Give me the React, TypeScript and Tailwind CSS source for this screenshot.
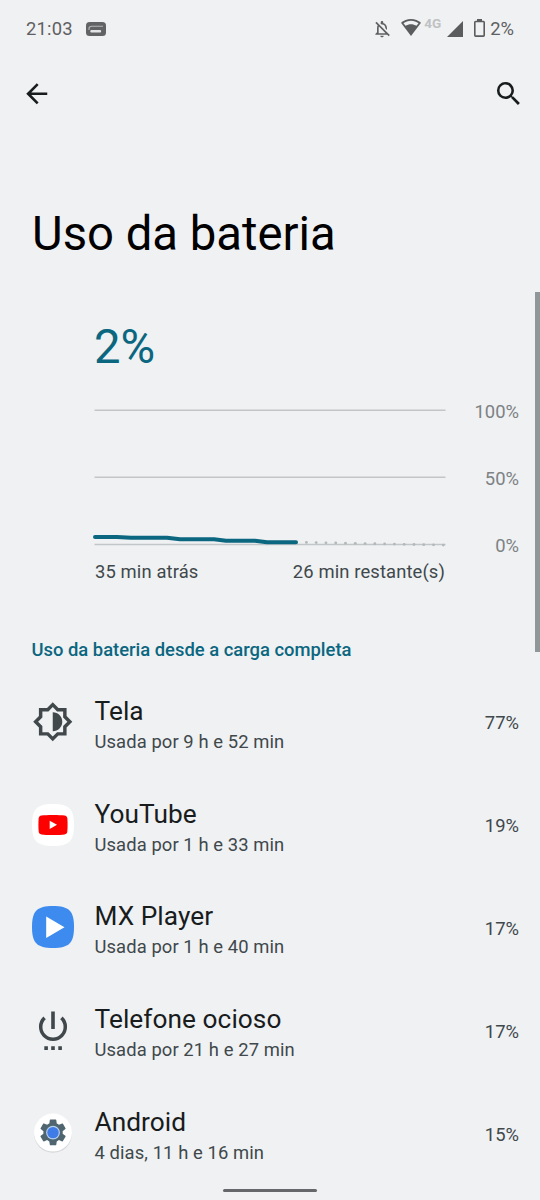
import type { ReactNode } from 'react'
import { MdArrowBack, MdSearch, MdOutlineNotificationsOff } from 'react-icons/md'

interface UsageEntry {
  name: string
  detail: string
  percent: string
  icon: ReactNode
}

function ScreenIcon() {
  return (
    <svg viewBox="0 0 24 24" className="w-[41.5px] h-[41.5px] shrink-0" fill="#40484b">
      <path d="M20 8.69V4h-4.69L12 .69 8.69 4H4v4.69L.69 12 4 15.31V20h4.69L12 23.31 15.31 20H20v-4.69L23.31 12 20 8.69zm-2 5.79V18h-3.52L12 20.48 9.52 18H6v-3.52L3.52 12 6 9.52V6h3.52L12 3.52 14.48 6H18v3.52L20.48 12 18 14.48z" />
      <path d="M12 6.5v11c3.04 0 5.5-2.46 5.5-5.5s-2.46-5.5-5.5-5.5z" />
    </svg>
  )
}

function YouTubeIcon() {
  return (
    <svg viewBox="0 0 42 42" className="w-[42px] h-[42px]">
      <path d="M21 0C37 0 42 5 42 21S37 42 21 42 0 37 0 21 5 0 21 0z" fill="#fff" />
      <path d="M21 10.900c5 0 9.300.2 11.500.5 1.900.3 2.600 1.200 2.800 2.900.4 3.900.4 9.300 0 13.200-.2 1.700-.9 2.600-2.800 2.900-4.500.7-18.500.7-23 0-1.900-.3-2.600-1.200-2.800-2.900-.4-3.900-.4-9.300 0-13.200.2-1.700.9-2.600 2.800-2.900 2.200-.3 6.500-.5 11.500-.5z" fill="#fe0000" />
      <path d="M17.700 16.700v8.200l7.300-4.100z" fill="#fff" />
    </svg>
  )
}

function MxPlayerIcon() {
  return (
    <svg viewBox="0 0 42 42" className="w-[42px] h-[42px]">
      <path d="M21 0C37 0 42 5 42 21S37 42 21 42 0 37 0 21 5 0 21 0z" fill="#3d8bee" />
      <path d="M14.200 10.500v21.500L32.500 21.200z" fill="#fff" />
    </svg>
  )
}

function IdleIcon() {
  return (
    <svg viewBox="0 0 42 42" className="w-[42px] h-[42px]">
      <path d="M12.600 8.900A12.300 12.300 0 1 0 29.400 8.900" fill="none" stroke="#40484b" strokeWidth="3.500" />
      <path d="M19.200 2.500h3.600v17.600h-3.600zM12.300 37.300h3.600v3.600h-3.600zM19.200 37.300h3.600v3.600h-3.600zM26.300 37.300h3.600v3.600h-3.600z" fill="#40484b" />
    </svg>
  )
}

function AndroidIcon() {
  return (
    <svg viewBox="0 0 42 42" className="w-[42px] h-[42px]">
      <circle cx="21" cy="21.800" r="19" fill="#d3d6d8" />
      <circle cx="21" cy="20.600" r="19" fill="#fff" />
      <g transform="translate(4.900 4.300) scale(1.345)">
        <path
          d="M19.140 12.940c.04-.3.060-.61.060-.940 0-.32-.02-.64-.07-.94l2.030-1.580c.18-.14.230-.41.120-.61l-1.920-3.320c-.12-.22-.37-.29-.59-.22l-2.390.96c-.5-.38-1.030-.7-1.620-.94l-.36-2.540c-.04-.24-.24-.41-.48-.41h-3.840c-.24 0-.43.170-.47.410l-.36 2.540c-.59.240-1.130.570-1.620.940l-2.390-.96c-.22-.08-.47 0-.59.220L2.740 8.870c-.12.210-.08.470.120.610l2.030 1.580c-.05.300-.09.630-.09.940s.02.640.070.940l-2.030 1.580c-.18.140-.23.410-.12.610l1.920 3.320c.12.220.37.290.59.220l2.390-.96c.5.380 1.030.700 1.620.940l.36 2.540c.05.240.240.410.480.410h3.840c.24 0 .44-.17.470-.41l.36-2.540c.59-.24 1.130-.56 1.620-.94l2.390.960c.22.080.470 0 .590-.22l1.920-3.320c.12-.22.070-.47-.12-.61l-2.010-1.580z"
          fill="#4f656f"
        />
      </g>
      <circle cx="21" cy="20.600" r="6.900" fill="#b9d0ee" />
      <circle cx="21" cy="20.600" r="5.700" fill="#3f7ce8" />
    </svg>
  )
}

const ENTRIES: UsageEntry[] = [
  { name: 'Tela', detail: 'Usada por 9 h e 52 min', percent: '77%', icon: <ScreenIcon /> },
  { name: 'YouTube', detail: 'Usada por 1 h e 33 min', percent: '19%', icon: <YouTubeIcon /> },
  { name: 'MX Player', detail: 'Usada por 1 h e 40 min', percent: '17%', icon: <MxPlayerIcon /> },
  { name: 'Telefone ocioso', detail: 'Usada por 21 h e 27 min', percent: '17%', icon: <IdleIcon /> },
  { name: 'Android', detail: '4 dias, 11 h e 16 min', percent: '15%', icon: <AndroidIcon /> },
]

function StatusBar() {
  return (
    <div className="flex items-center h-[59px] px-[26px] text-[18.400px] text-[#5f6062]">
      <span className="leading-none tracking-[0.2px]">21:03</span>
      <svg viewBox="0 0 20 14" className="w-5 h-3.5 ml-[13px] -mt-0.5">
        <rect width="20" height="14" rx="3.500" fill="#626365" />
        <path d="M17 4.200H5.800Q3 4.200 3 6.500V8" fill="none" stroke="#b4b6b8" strokeWidth="1.100" />
        <rect x="4.300" y="8" width="10.800" height="2.400" rx="1" fill="#e2e4e6" />
      </svg>
      <div className="ml-auto flex items-center">
        <MdOutlineNotificationsOff className="w-5 h-5 -mt-px" />
        <svg viewBox="0 0 20 17" className="w-5 h-[17px] ml-[9px] -mt-1">
          <path d="M10 0C6.100 0 2.600 1.400 0 3.800L10 17 20 3.800C17.400 1.400 13.900 0 10 0z" fill="#5b5c5e" />
          <path d="M2.500 4.200C4.600 2.700 7.200 1.800 10 1.800S15.400 2.700 17.500 4.200L15.500 6.800C13.900 5.700 12 5.200 10 5.200S6.100 5.700 4.500 6.800z" fill="#eff1f3" />
        </svg>
        <span className="ml-[3px] mb-[11px] text-[13.500px] leading-none font-bold text-[#bfc1c3]">4G</span>
        <svg viewBox="0 0 16 16" className="w-4 h-4 ml-[6px] -mt-0.5">
          <path d="M16 0v16H0z" fill="#5b5c5e" />
        </svg>
        <svg viewBox="0 0 11 18" className="w-[11px] h-[18px] ml-[11px] -mt-[3px]">
          <path d="M3 0h5v2.500H3z" fill="#5b5c5e" />
          <rect x=".8" y="2.500" width="9.400" height="14.600" rx=".8" fill="none" stroke="#5b5c5e" strokeWidth="1.600" />
        </svg>
        <span className="ml-[5px] leading-none">2%</span>
      </div>
    </div>
  )
}

function BatteryChart() {
  // remaining-time projection, one dot every 9.8px until the right edge
  const dots = Array.from({ length: 15 }, (_, i) => ({ x: 213.400 + i * 9.780, y: 142.400 + i * 0.190 }))

  return (
    <div className="flex h-[159px] pl-[93px] pr-[21px] justify-between">
      <svg viewBox="0 0 354 159" className="w-[354px] h-[159px]">
        <path d="M1.500 10.300h351M1.500 77.200h351M1.500 144.500h351" stroke="#c3c6c8" strokeWidth="1.500" />
        {dots.map((dot) => (
          <circle key={dot.x} cx={dot.x} cy={dot.y} r="1.400" fill="#b3b8ba" />
        ))}
        <path
          d="M2 137H24L38 137.800H74L87 139.300H121L133 140.700H162L174 142.300H203"
          fill="none"
          stroke="#0b6680"
          strokeWidth="4"
          strokeLinecap="round"
          strokeLinejoin="round"
        />
      </svg>
      <div className="flex flex-col justify-between items-end h-[158px] text-[18.400px] leading-6 text-[#7d8284]">
        <span>100%</span>
        <span>50%</span>
        <span>0%</span>
      </div>
    </div>
  )
}

export default function App() {
  return (
    <div className="relative w-[540px] h-[1200px] overflow-hidden bg-[#eff1f3] font-[Roboto,sans-serif]">
      <StatusBar />

      {/* Toolbar */}
      <div className="flex items-center justify-between h-[70px] pl-[21px] pr-4 text-[#191c1d]">
        <MdArrowBack className="w-[31.500px] h-[31.500px]" />
        <MdSearch className="w-[31.500px] h-[31.500px]" />
      </div>

      <h1 className="mt-[75px] h-[60px] pl-8 text-[47.250px] leading-[60px] text-black">Uso da bateria</h1>

      {/* Battery level */}
      <div className="mt-[53px] h-[60px] pl-[94px] text-[47.250px] leading-[60px] text-[#0b6680]">2%</div>
      <div className="mt-[23px]">
        <BatteryChart />
      </div>
      <div className="flex justify-between px-[95px] pt-px text-[18.400px] leading-6 tracking-[0.120px] text-[#40484b]">
        <span>35 min atrás</span>
        <span>26 min restante(s)</span>
      </div>

      <h2 className="mt-[54px] pl-[31.500px] text-[18.400px] leading-6 font-medium text-[#0b6680]">
        Uso da bateria desde a carga completa
      </h2>

      {/* Usage list */}
      <ul className="mt-[8.500px]">
        {ENTRIES.map((entry) => (
          <li key={entry.name} className="flex items-center h-[102.800px] pl-[31.500px] pr-[21px]">
            <div className="w-[42px] h-[42px] flex items-center justify-center">{entry.icon}</div>
            <div className="flex-1 ml-[21px] pt-[5px]">
              <p className="text-[26.250px] leading-[34px] tracking-[0.050px] text-[#191c1d]">{entry.name}</p>
              <p className="text-[18.400px] leading-[27px] tracking-[0.090px] text-[#40484b]">{entry.detail}</p>
            </div>
            <span className="pt-[3px] text-[18.400px] leading-6 text-[#40484b]">{entry.percent}</span>
          </li>
        ))}
      </ul>

      <div className="absolute right-0 top-[292px] w-[5px] h-[360px] bg-[#8f9799]" />
      <div className="absolute left-[223px] top-[1189px] w-[94px] h-[3px] rounded-full bg-[#66676a]" />
    </div>
  )
}
